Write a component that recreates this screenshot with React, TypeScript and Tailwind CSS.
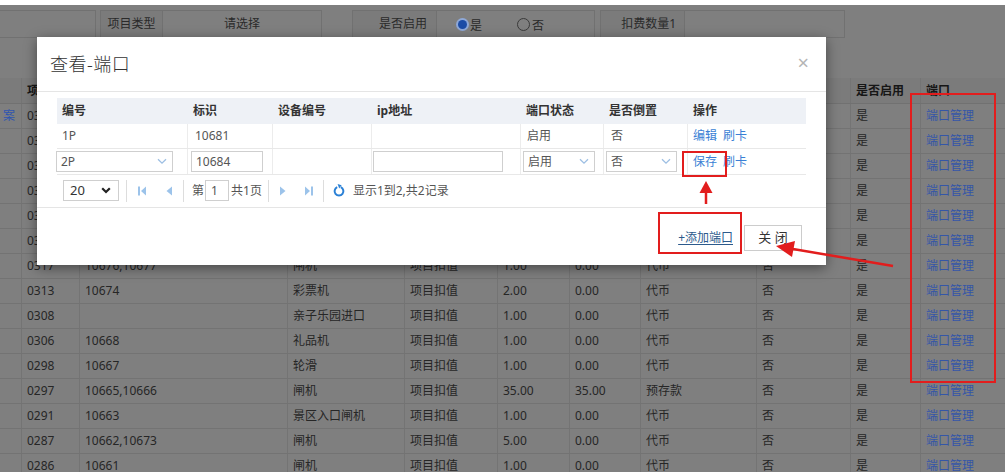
import React from 'react';

const bgHeader = ['', '项目编号', '标识', '设备类型', '扣值方式', '扣值', '赠送', '扣费类型', '是否倒置', '是否启用', '端口'];

const bgRows: string[][] = [
  ['案', '0336', '10682,10683', '闸机', '项目扣值', '1.00', '0.00', '代币', '否', '是', '端口管理'],
  ['', '0335', '10681,10684', '闸机', '项目扣值', '1.00', '0.00', '代币', '否', '是', '端口管理'],
  ['', '0331', '10680', '闸机', '项目扣值', '1.00', '0.00', '代币', '否', '是', '端口管理'],
  ['', '0328', '10679', '闸机', '项目扣值', '1.00', '0.00', '代币', '否', '是', '端口管理'],
  ['', '0325', '10678', '闸机', '项目扣值', '1.00', '0.00', '代币', '否', '是', '端口管理'],
  ['', '0321', '10675', '闸机', '项目扣值', '1.00', '0.00', '代币', '否', '是', '端口管理'],
  ['', '0317', '10676,10677', '闸机', '项目扣值', '1.00', '0.00', '代币', '否', '是', '端口管理'],
  ['', '0313', '10674', '彩票机', '项目扣值', '2.00', '0.00', '代币', '否', '是', '端口管理'],
  ['', '0308', '', '亲子乐园进口', '项目扣值', '1.00', '0.00', '代币', '否', '是', '端口管理'],
  ['', '0306', '10668', '礼品机', '项目扣值', '1.00', '0.00', '代币', '否', '是', '端口管理'],
  ['', '0298', '10667', '轮滑', '项目扣值', '1.00', '0.00', '代币', '否', '是', '端口管理'],
  ['', '0297', '10665,10666', '闸机', '项目扣值', '35.00', '35.00', '预存款', '否', '是', '端口管理'],
  ['', '0291', '10663', '景区入口闸机', '项目扣值', '1.00', '0.00', '代币', '否', '是', '端口管理'],
  ['', '0287', '10662,10673', '闸机', '项目扣值', '5.00', '0.00', '代币', '否', '是', '端口管理'],
  ['', '0286', '10661', '闸机', '项目扣值', '1.00', '0.00', '代币', '否', '是', '端口管理'],
];

const bgGrid =
  'grid grid-cols-[22px_58px_208px_117px_93px_72px_71px_116px_94px_70px_100px]';

function Chevron({ className = '' }: { className?: string }) {
  return (
    <svg width="10" height="7" viewBox="0 0 10 7" className={className}>
      <path d="M1 1.2 L5 5.2 L9 1.2" fill="none" stroke="currentColor" strokeWidth="1.3" />
    </svg>
  );
}

function SelectBox({ value, w, pl = 'pl-[4px]' }: { value: string; w: string; pl?: string }) {
  return (
    <div className={`${w} h-[21px] border border-[#cfcfcf] bg-white flex items-center justify-between`}>
      <span className={`${pl} text-[12px] text-[#555]`}>{value}</span>
      <span className="w-[20px] h-full flex items-center justify-center text-[#9dbfe3]">
        <Chevron />
      </span>
    </div>
  );
}

/* The page behind the modal, drawn already dimmed by the backdrop */
function Background() {
  return (
    <div className="absolute left-0 right-0 top-[5px] bottom-0 bg-[#7f7f7f]">
      {/* filter form */}
      <div className="h-[5px]" />
      <div className="flex h-[28px] text-[12px] text-[#2a2a2a]">
        <div className="w-[96px] border border-l-0 border-[#717171]" />
        <div className="ml-[4px] w-[63px] border border-[#717171] bg-[#7b7b7b] flex items-center justify-center">项目类型</div>
        <div className="w-[159px] border border-l-0 border-[#717171] flex items-center justify-center">请选择</div>
        <div className="ml-[30px] w-[85px] border border-[#717171] bg-[#7b7b7b] flex items-center justify-end pr-[9px]">是否启用</div>
        <div className="w-[158px] border border-l-0 border-[#717171] flex items-center">
          <span className="ml-[19px] w-[13px] h-[13px] rounded-full bg-[#8ea8d8] flex items-center justify-center">
            <span className="w-[9px] h-[9px] rounded-full bg-[#1c4ca6]" />
          </span>
          <span className="ml-[1px] mt-[3px]">是</span>
          <span className="ml-[35px] w-[13px] h-[13px] rounded-full border border-[#3a3a3a]" />
          <span className="ml-[2px] mt-[3px]">否</span>
        </div>
        <div className="ml-[5px] w-[85px] border border-[#717171] bg-[#7b7b7b] flex items-center justify-end pr-[8px]">扣费数量1</div>
        <div className="w-[160px] border border-l-0 border-[#717171]" />
      </div>
      <div className="h-[40px]" />
      {/* table */}
      <div className="text-[12px] text-[#262626]">
        <div className={`${bgGrid} h-[26px] bg-[#7b7b7b] font-bold text-[#161616] border-b border-[#717171]`}>
          {bgHeader.map((h, i) => (
            <div key={i} className="pl-[5px] flex items-center border-r border-[#747474] whitespace-nowrap overflow-hidden">
              {h}
            </div>
          ))}
        </div>
        {bgRows.map((r, ri) => (
          <div key={ri} className={`${bgGrid} h-[25px] border-b border-[#737373]`}>
            {r.map((c, ci) => (
              <div
                key={ci}
                className={`flex items-center border-r border-[#747474] whitespace-nowrap overflow-hidden ${
                  ci === 0 ? 'pl-[3px] text-[#2f55b0]' : ci === 10 ? 'pl-[5px] text-[#3456a8]' : 'pl-[5px]'
                }`}
              >
                {c}
              </div>
            ))}
          </div>
        ))}
      </div>
    </div>
  );
}

const mGrid = 'grid grid-cols-[131px_85px_99px_149px_83px_84px_117px]';

function Modal() {
  const header = ['编号', '标识', '设备编号', 'ip地址', '端口状态', '是否倒置', '操作'];
  return (
    <div className="absolute z-20 left-[37px] top-[37px] w-[789px] h-[228px] bg-white shadow-[0_3px_12px_rgba(0,0,0,0.45)] flex flex-col">
      <div className="h-[55px] border-b border-[#e5e5e5] flex items-center justify-between pl-[13px] pr-[17px]">
        <span className="text-[18px] text-[#333] font-light tracking-[0.5px]">查看-端口</span>
        <span className="text-[20px] text-[#b5b5b5] leading-none mt-[-2px]">×</span>
      </div>
      <div className="px-[20px] pt-[6px] flex-1">
        <div className="text-[12px] text-[#555]">
          <div className={`${mGrid} h-[26px] bg-[#eef1f6] font-bold text-[#333]`}>
            {header.map((h, i) => (
              <div key={i} className="pl-[5px] flex items-center">
                {h}
              </div>
            ))}
          </div>
          <div className={`${mGrid} h-[25px] border-b border-[#e8e8e8]`}>
            <div className="pl-[5px] flex items-center border-r border-[#ececec]">1P</div>
            <div className="pl-[7px] flex items-center border-r border-[#ececec]">10681</div>
            <div className="border-r border-[#ececec]" />
            <div className="border-r border-[#ececec]" />
            <div className="pl-[6px] flex items-center border-r border-[#ececec]">启用</div>
            <div className="pl-[7px] flex items-center border-r border-[#ececec]">否</div>
            <div className="pl-[5px] flex items-center text-[#3a7fd5]">编辑<span className="ml-[6px]">刷卡</span></div>
          </div>
          <div className={`${mGrid} h-[26px] border-b border-[#e8e8e8]`}>
            <div className="flex items-center border-r border-[#ececec] -ml-[1px]">
              <SelectBox value="2P" w="w-[117px]" />
            </div>
            <div className="pl-[3px] flex items-center border-r border-[#ececec]">
              <div className="w-[72px] h-[21px] border border-[#cfcfcf] flex items-center pl-[4px] text-[#555]">10684</div>
            </div>
            <div className="border-r border-[#ececec]" />
            <div className="pl-[1px] flex items-center border-r border-[#ececec]">
              <div className="w-[130px] h-[21px] border border-[#cfcfcf]" />
            </div>
            <div className="pl-[2px] flex items-center border-r border-[#ececec]">
              <SelectBox value="启用" w="w-[72px]" />
            </div>
            <div className="pl-[2px] flex items-center border-r border-[#ececec]">
              <SelectBox value="否" w="w-[71px]" />
            </div>
            <div className="pl-[5px] flex items-center text-[#3a7fd5]">保存<span className="ml-[6px]">刷卡</span></div>
          </div>
          {/* pager */}
          <div className="h-[31px] flex items-center text-[#555]">
            <div className="ml-[6px] w-[56px] h-[21px] border border-[#cfcfcf] flex items-center justify-between pl-[6px] pr-[7px] text-[13px] text-[#333]">
              <span>20</span>
              <svg width="10" height="7" viewBox="0 0 10 7">
                <path d="M1.2 1.2 L5 5 L8.8 1.2" fill="none" stroke="#222" strokeWidth="2.2" />
              </svg>
            </div>
            <div className="ml-[7px] w-px h-[22px] bg-[#ddd]" />
            <svg className="ml-[11px]" width="9" height="10" viewBox="0 0 9 10">
              <rect x="0" y="0.5" width="2" height="9" fill="#9cc3ea" />
              <path d="M8 0.5 L3 5 L8 9.5 Z" fill="#9cc3ea" />
            </svg>
            <svg className="ml-[19px]" width="6" height="10" viewBox="0 0 6 10">
              <path d="M6 0.5 L0.5 5 L6 9.5 Z" fill="#9cc3ea" />
            </svg>
            <div className="ml-[11px] w-px h-[22px] bg-[#ddd]" />
            <span className="ml-[8px] text-[12px]">第</span>
            <div className="ml-[1px] w-[24px] h-[21px] border border-[#cfcfcf] flex items-center pl-[5px] text-[12px]">1</div>
            <span className="ml-[2px] text-[12px]">共1页</span>
            <div className="ml-[6px] w-px h-[22px] bg-[#ddd]" />
            <svg className="ml-[11px]" width="6" height="10" viewBox="0 0 6 10">
              <path d="M0 0.5 L5.5 5 L0 9.5 Z" fill="#9cc3ea" />
            </svg>
            <svg className="ml-[18px]" width="9" height="10" viewBox="0 0 9 10">
              <path d="M1 0.5 L6 5 L1 9.5 Z" fill="#9cc3ea" />
              <rect x="7" y="0.5" width="2" height="9" fill="#9cc3ea" />
            </svg>
            <div className="ml-[10px] w-px h-[22px] bg-[#ddd]" />
            <svg className="ml-[9px]" width="12" height="13" viewBox="0 0 12 13">
              <path d="M4.2 3.2 A4.4 4.4 0 1 0 7.8 3.2" fill="none" stroke="#2a80d6" strokeWidth="2" />
              <path d="M4.6 0 L8.6 1.2 L6.2 4.6 Z" fill="#2a80d6" />
            </svg>
            <span className="ml-[8px] text-[12px]">显示1到2,共2记录</span>
          </div>
        </div>
      </div>
      <div className="h-[58px] border-t border-[#e5e5e5] flex items-center justify-end pr-[24px]">
        <span className="text-[12px] text-[#2c5a8c] underline underline-offset-2 mt-[2px]">+添加端口</span>
        <div className="ml-[11px] w-[58px] h-[26px] border border-[#ccc] bg-white flex items-center justify-center text-[13px] text-[#333] mt-[2px]">
          关 闭
        </div>
      </div>
    </div>
  );
}

export default function App() {
  return (
    <div className="relative isolate w-[1005px] h-[472px] overflow-hidden bg-white font-['Noto_Sans','Noto_Sans_CJK_SC',sans-serif]">
      <Background />
      <Modal />
      {/* annotations */}
      <div className="absolute z-30 left-[682px] top-[151px] w-[45px] h-[26px] border-2 border-[#e21d1d]" />
      <div className="absolute z-30 left-[658px] top-[212px] w-[84px] h-[42px] border-2 border-[#e21d1d]" />
      <div className="absolute z-30 left-[910px] top-[93px] w-[86px] h-[290px] border-2 border-[#e21d1d]" />
      <svg className="absolute z-30 inset-0 pointer-events-none" width="1005" height="472">
        <line x1="706" y1="204" x2="706" y2="190" stroke="#e21d1d" strokeWidth="2.5" />
        <polygon points="706,181 699.5,193 712.5,193" fill="#e21d1d" />
        <line x1="893" y1="266" x2="790" y2="248.5" stroke="#e21d1d" strokeWidth="2.5" />
        <polygon points="776,246 795,241 792,257" fill="#e21d1d" />
      </svg>
    </div>
  );
}
